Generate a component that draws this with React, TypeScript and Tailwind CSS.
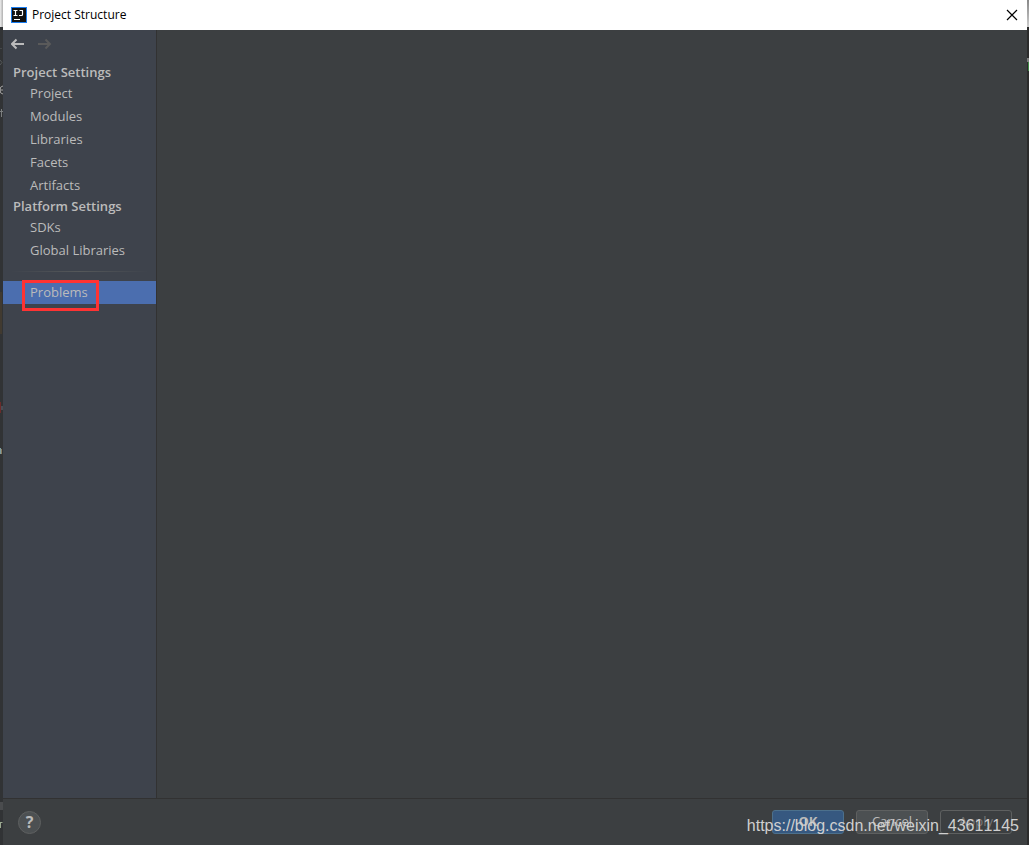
import React, { useState } from 'react';

interface NavGroup {
  title: string;
  items: string[];
}

const groups: NavGroup[] = [
  { title: 'Project Settings', items: ['Project', 'Modules', 'Libraries', 'Facets', 'Artifacts'] },
  { title: 'Platform Settings', items: ['SDKs', 'Global Libraries'] },
];

const Logo = () => (
  <svg className="w-4 h-4" viewBox="0 0 16 16" fill="none" aria-hidden="true">
    <rect x="0.5" y="0.5" width="15" height="15" fill="#111" stroke="#1a7df0" />
    <path d="M2.5 3.5h4M4.5 3.5v5M2.5 8.5h4M8.5 3.5h3.5M11.5 3.5v4q0 1-1 1H8" stroke="#fff" strokeWidth="1.2" />
    <path d="M3 12.5h6" stroke="#fff" />
  </svg>
);

const Arrow = ({ forward = false }: { forward?: boolean }) => (
  <svg className="w-[14px] h-3" viewBox="0 0 14 12" fill="none" stroke="currentColor" strokeWidth="2" aria-hidden="true">
    {forward ? <path d="M0 6H12M7.5 1.5 12 6l-4.5 4.5" /> : <path d="M13 6H1M5.5 1.5 1 6l4.5 4.5" />}
  </svg>
);

// Slivers of the editor window that show on both sides of the dialog
const LeftEdge = () => (
  <div className="flex flex-col w-[3px] shrink-0 bg-[#313335]" aria-hidden="true">
    <div className="h-[27px] bg-gradient-to-r from-[#eeeeee] to-[#b0b0b0]" />
    <svg className="w-[3px] h-[818px]" viewBox="0 27 3 818" fill="none">
      <path d="M0 48.5h2" stroke="#45484a" />
      <path d="M0 60l2 2.500-2 2.500" stroke="#55585a" />
      <path d="M3 86q-3 0-3 4t3 4M0 90h3" stroke="#a0a0a0" />
      <path d="M1.500 109v8M0 111.500h3" stroke="#7c7f80" />
      <path d="M0 292h2v42H0z" fill="#413a30" />
      <path d="M0 402h1v11H0z" fill="#6b2b2b" />
      <path d="M1 406h2v4H1z" fill="#4a4e55" />
      <path d="M0 448h1v6H0z" fill="#7f9fa0" />
      <path d="M1 449h1v5H1z" fill="#8a7b60" />
      <path d="M0 802h3v8H0z" fill="#4a4c4e" />
      <path d="M0.500 822v6M0.500 822.500h2" stroke="#9ba890" />
    </svg>
  </div>
);

const RightEdge = () => (
  <div className="flex flex-col w-[2px] shrink-0 bg-[#2b2b2b]" aria-hidden="true">
    <div className="h-[27px] bg-gradient-to-b from-[#888888] to-[#cccccc]" />
    <div className="h-[31px]" />
    <div className="h-1 bg-[#808080]" />
    <div className="h-[9px] ml-px bg-[#3f8a45]" />
  </div>
);

const TitleBar = () => (
  <header className="flex items-center h-[30px] pl-2 pr-[9px] bg-white text-black text-xs">
    <Logo />
    <h1 className="ml-[5px] flex-1">Project Structure</h1>
    <button type="button" aria-label="Close" className="pb-px">
      <svg className="block w-3 h-3" viewBox="0 0 12 12" stroke="#000" strokeWidth="1.2" aria-hidden="true">
        <path d="M1 1l10 10M11 1L1 11" />
      </svg>
    </button>
  </header>
);

interface NavItemProps {
  label: string;
  active: boolean;
  onSelect: (label: string) => void;
}

const NavItem: React.FC<NavItemProps> = ({ label, active, onSelect }) => (
  <button
    type="button"
    onClick={() => onSelect(label)}
    className={`block w-full h-[23px] pl-[27px] text-left ${active ? 'bg-[#4b6eaf]' : ''}`}
  >
    {label}
  </button>
);

const App: React.FC = () => {
  const [selected, setSelected] = useState('Problems');

  return (
    <div className="flex min-h-screen bg-[#2b2b2b] font-['Open_Sans',sans-serif] text-[13px] text-[#bbbbbb]">
      <LeftEdge />
      <div className="flex flex-col flex-1 min-w-0 bg-[#3c3f41]">
        <TitleBar />
        <div className="flex flex-1">
          <aside className="w-[154px] shrink-0 border-r border-[#323232] bg-[#3e434c]">
            <div className="flex items-start gap-[13px] h-[33px] pt-2 pl-2">
              <button type="button" aria-label="Back" className="text-[#bbbbbb]"><Arrow /></button>
              <button type="button" aria-label="Forward" disabled className="text-[#5a5a5a]"><Arrow forward /></button>
            </div>
            <nav>
              {groups.map((group) => (
                <div key={group.title}>
                  <h2 className="h-[19px] pl-[10px] font-semibold leading-[19px]">{group.title}</h2>
                  {group.items.map((item) => (
                    <NavItem key={item} label={item} active={selected === item} onSelect={setSelected} />
                  ))}
                </div>
              ))}
              <div className="flex items-center h-[19px] px-2">
                <div className="flex-1 h-px bg-gradient-to-r from-transparent via-[#55585a] to-transparent" />
              </div>
              <div className="relative">
                <NavItem label="Problems" active={selected === 'Problems'} onSelect={setSelected} />
                <div className="absolute -top-px left-[19px] w-[77px] h-[31px] border-3 border-[#ff3333] pointer-events-none" />
              </div>
            </nav>
          </aside>
          <main className="flex-1" />
        </div>
        <footer className="relative flex items-center h-[47px] px-[15px] border-t border-[#323232]">
          <button type="button" aria-label="Help" className="flex items-center justify-center w-[23px] h-[23px] rounded-full border border-[#5e6060] bg-[#4c5052] text-base font-bold">
            ?
          </button>
          <div className="flex gap-3 ml-auto">
            <button type="button" className="w-[72px] h-6 rounded-[3px] border border-[#4c708c] bg-[#365880] font-bold">OK</button>
            <button type="button" className="w-[72px] h-6 rounded-[3px] border border-[#5e6060] bg-[#4c5052]">Cancel</button>
            <button type="button" disabled className="w-[72px] h-6 rounded-[3px] border border-[#5e6060] text-[#777777]">Apply</button>
          </div>
          <p className="absolute right-2 top-[15px] font-['Liberation_Sans',sans-serif] text-base leading-6 text-[#d0d0d0] [font-kerning:none] pointer-events-none">
            https://blog.csdn.net/weixin_43611145
          </p>
        </footer>
      </div>
      <RightEdge />
    </div>
  );
};

export default App;
